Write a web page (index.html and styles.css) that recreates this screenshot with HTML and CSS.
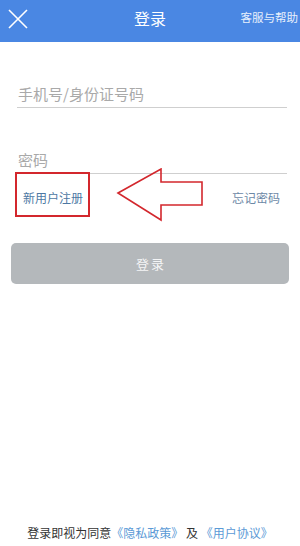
FILE: index.html
```html
<!DOCTYPE HTML>
<html>
<head>
<meta charset="utf-8">
<title>登录</title>
<link rel="stylesheet" href="styles.css">
</head>
<body>
<div class="page">
	<div class="header">
		<svg class="close" width="22" height="22" viewBox="0 0 22 22">
			<path d="M2 2 L20 20 M20 2 L2 20" stroke="#fff" stroke-width="1.6" fill="none"/>
		</svg>
		<div class="title">登录</div>
		<div class="help">客服与帮助</div>
	</div>
	<div class="form">
		<div class="field first">手机号/身份证号码</div>
		<div class="field">密码</div>
		<div class="links">
			<span class="reg">新用户注册</span>
			<span class="forget">忘记密码</span>
			<svg class="arrow" width="90" height="56" viewBox="0 0 90 56">
				<path d="M2 25 L45 1 L45 14 L86 14 L86 37 L45 37 L45 52 Z" stroke="#d3272d" stroke-width="1.6" fill="none" stroke-linejoin="miter"/>
			</svg>
		</div>
		<div class="btn">登录</div>
	</div>
	<div class="footer">登录即视为同意<span class="blue">《隐私政策》</span> 及 <span class="blue">《用户协议》</span></div>
</div>
</body>
</html>
```
FILE: styles.css
```css
body{
	margin: 0;
	background: #fff;
	font-family: "Noto Sans CJK SC", "Noto Sans", sans-serif;
}
.page{
	min-height: 546px;
	display: flex;
	flex-direction: column;
}
.header{
	height: 42px;
	background: #4a87e3;
	display: flex;
	align-items: center;
	position: relative;
	color: #fff;
}
.close{
	margin-left: 7px;
	margin-top: -5px;
}
.title{
	position: absolute;
	left: 0;
	right: 0;
	text-align: center;
	font-size: 16px;
	line-height: 22px;
	top: 7px;
}
.help{
	margin-left: auto;
	margin-right: 2px;
	font-size: 11.5px;
	color: #e8f0fc;
	position: relative;
	margin-top: -9px;
}
.form{
	padding: 0 13px 0 17px;
}
.field{
	height: 23px;
	line-height: 20px;
	border-bottom: 1px solid #cfcfcf;
	font-size: 15px;
	color: #a9a9a9;
	padding-left: 1px;
	margin-top: 42px;
}
.links{
	position: relative;
	display: flex;
	justify-content: space-between;
	align-items: flex-start;
	margin-top: -2px;
	height: 45px;
}
.reg{
	margin-left: -2px;
	border: 2px solid #d3272d;
	padding: 15px 5px 8px 6px;
	font-size: 12px;
	line-height: 18px;
	color: #4d78a3;
}
.forget{
	margin-top: 17px;
	margin-right: 7px;
	font-size: 12px;
	line-height: 18px;
	color: #6c88a6;
}
.arrow{
	position: absolute;
	left: 99px;
	top: -4px;
}
.btn{
	margin: 26px -2px 0 -6px;
	height: 41px;
	line-height: 41px;
	background: #b4b8bb;
	border-radius: 5px;
	text-align: center;
	color: #f4f5f6;
	font-size: 13px;
	letter-spacing: 2px;
	padding-left: 2px;
}
.footer{
	margin-top: auto;
	padding-bottom: 5px;
	text-align: center;
	font-size: 12px;
	line-height: 17px;
	color: #333;
}
.blue{
	color: #5b9ad6;
}
```
